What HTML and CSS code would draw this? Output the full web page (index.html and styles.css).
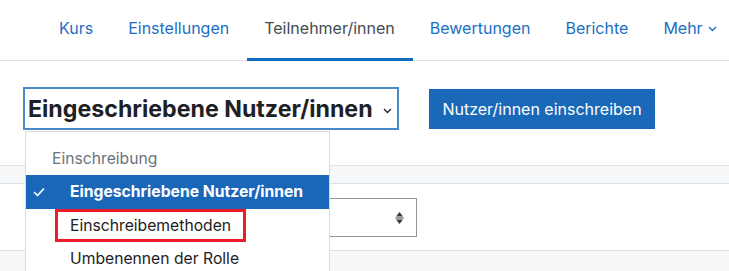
FILE: index.html
```html
<!DOCTYPE html>
<html lang="de">
<head>
    <meta charset="UTF-8">
    <meta name="viewport" content="width=device-width, initial-scale=1.0">
    <title>Teilnehmer/innen</title>
    <link rel="stylesheet" href="styles.css">
</head>
<body>
    <nav class="tabs">
        <a class="tab" href="#">Kurs</a>
        <a class="tab" href="#">Einstellungen</a>
        <a class="tab tab-active" href="#">Teilnehmer/innen</a>
        <a class="tab" href="#">Bewertungen</a>
        <a class="tab" href="#">Berichte</a>
        <a class="tab" href="#">Mehr <svg class="caret" width="9" height="6" viewBox="0 0 9 6"><path d="M1 1l3.5 3.5L8 1" fill="none" stroke="#1a6fc4" stroke-width="1.4"/></svg></a>
    </nav>

    <div class="head">
        <div class="picker">
            <div class="picker-box">
                <span class="picker-title">Eingeschriebene Nutzer/innen</span>
                <svg class="picker-arrow" width="9" height="6" viewBox="0 0 9 6"><path d="M1 1l3.5 3.5L8 1" fill="none" stroke="#1d2125" stroke-width="1.3"/></svg>
            </div>
            <!-- offenes Menü -->
            <div class="menu">
                <div class="menu-head">Einschreibung</div>
                <div class="menu-item menu-item-active">
                    <svg class="check" width="12" height="10" viewBox="0 0 12 10"><path d="M1 5l3.5 3.5L11 1.5" fill="none" stroke="#fff" stroke-width="1.6"/></svg>
                    Eingeschriebene Nutzer/innen
                </div>
                <div class="menu-item"><span class="mark">Einschreibemethoden</span></div>
                <div class="menu-item">Umbenennen der Rolle</div>
            </div>
        </div>
        <button class="btn">Nutzer/innen einschreiben</button>
    </div>

    <div class="band"></div>
    <div class="filter">
        <div class="filter-select">
            <svg width="9" height="14" viewBox="0 0 9 14"><path d="M4.5 1L8 5.5H1z M4.5 13L8 8.5H1z" fill="#343a40"/><rect x="0.5" y="6.5" width="8" height="1" fill="#343a40"/></svg>
        </div>
    </div>
    <div class="rest"></div>
</body>
</html>
```

FILE: styles.css
```css
*{margin:0;padding:0;box-sizing:border-box;}
body{
    font-family: Inter, "Noto Sans", sans-serif;
    color: #1d2125;
    background: #fff;
    overflow: hidden;
}
/* Reiter oben */
.tabs{
    display: flex;
    height: 61px;
    padding-left: 42px;
    border-bottom: 1px solid #dee2e6;
}
.tab{
    position: relative;
    display: flex;align-items: center;
    padding: 0 18px 4px 17px;
    font-size: 16px;
    color: #1a6fc4;
    text-decoration: none;
}
.tab-active{
    color: #444b52;
}
.tab-active::after{
    content: "";
    position: absolute;left: 0;right: 0;bottom: -1px;
    height: 3px;background: #0f6cbf;
}
.caret{
    margin-left: 5px;margin-top: 2px;
}
/* Kopfbereich */
.head{
    display: flex;align-items: flex-start;
    padding: 26px 0 0 23px;
    height: 104px;
}
.picker{
    position: relative;
}
.picker-box{
    display: flex;align-items: center;
    width: 376px;height: 43px;
    border: 2px solid #4a88c9;
    padding: 0 5px 0 3px;
}
.picker-title{
    font-size: 23.2px;font-weight: 700;
    white-space: nowrap;
}
.picker-arrow{
    margin: 5px 0 0 auto;
}
.menu{
    position: absolute;top: 44px;left: 2px;
    width: 305px;height: 200px;
    background: #fff;
    border: 1px solid #d8dbe0;
    padding-top: 12px;
    z-index: 2;
}
.menu-head{
    height: 31px;line-height: 30px;
    padding-left: 26px;
    font-size: 15.7px;color: #6a737b;
}
.menu-item{
    position: relative;
    height: 33px;line-height: 33px;
    padding-left: 44px;
    font-size: 15.7px;
}
.menu-item-active{
    height: 34px;
    background: #1a67ba;
    color: #fff;font-weight: 700;
}
.check{
    position: absolute;left: 7px;top: 12px;
}
.mark{
    display: inline-block;
    height: 33px;line-height: 27px;
    margin-left: -15px;padding: 0 12px;
    border: 3px solid #ee1c2b;
}
.btn{
    margin: 2px 0 0 30px;
    width: 226px;height: 40px;
    background: #1a68b8;color: #fff;
    border: 0;
    font-family: inherit;font-size: 16px;
}
/* Tabelle darunter */
.band{
    height: 19px;
    background: #f7f8fa;
    border-top: 1px solid #dee2e6;
    border-bottom: 1px solid #dee2e6;
}
.filter{
    height: 67px;
    padding: 14px 0 0 30px;
    border-bottom: 1px solid #dee2e6;
}
.filter-select{
    display: flex;align-items: center;justify-content: flex-end;
    width: 387px;height: 39px;
    border: 1px solid #8f959e;
    padding-right: 12px;
}
.rest{
    height: 40px;background: #f7f8fa;
}
```
